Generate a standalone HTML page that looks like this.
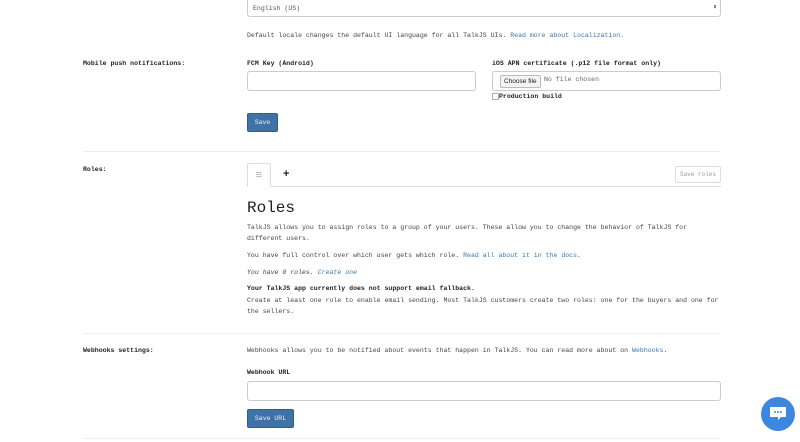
<!DOCTYPE html>
<html><head><style>
body{margin:0;width:800px;height:442px;background:#fff;position:relative;overflow:hidden;font-family:"Liberation Mono",monospace;font-size:6.55px;color:#444}
.a{position:absolute;white-space:nowrap}
.b{font-weight:bold;color:#222}
.l{color:#3a76b0}
.inp{position:absolute;border:1px solid #ccc;border-radius:3px;background:#fff;box-sizing:border-box}
.btn{position:absolute;background:#3f73a8;border:1px solid #2e5f91;border-radius:2px;color:#e8eef6;box-sizing:border-box;text-align:center;font-size:6.5px}
.hr{position:absolute;left:83px;width:637px;height:1px;background:#eee}
</style></head><body>
<div class="inp" style="left:247px;top:-2px;width:474px;height:19px"></div>
<div class="a" style="left:253px;top:5px;color:#555">English (US)</div>
<div class="a" style="left:713px;top:3px;font-size:7px;color:#333">⬍</div>
<div class="a" style="left:247px;top:32px">Default locale changes the default UI language for all TalkJS UIs. <span class="l">Read more about Localization.</span></div>

<div class="a b" style="left:83px;top:60px">Mobile push notifications:</div>
<div class="a b" style="left:247px;top:60px">FCM Key (Android)</div>
<div class="a b" style="left:492px;top:60px">iOS APN certificate (.p12 file format only)</div>
<div class="inp" style="left:247px;top:71px;width:229px;height:20px"></div>
<div class="inp" style="left:492px;top:71px;width:229px;height:20px"></div>
<div class="a" style="left:500px;top:75px;border:1px solid #bbb;border-radius:2px;background:#f3f3f3;font-family:'Liberation Sans',sans-serif;font-size:6.5px;padding:2px 3px;color:#222">Choose file</div>
<div class="a" style="left:544px;top:76px;color:#666">No file chosen</div>
<div class="a" style="left:492px;top:93px;width:5px;height:5px;border:1px solid #aaa;border-radius:1px"></div>
<div class="a b" style="left:499px;top:93px">Production build</div>
<div class="btn" style="left:247px;top:113px;width:31px;height:19px;line-height:17px">Save</div>
<div class="hr" style="top:151px"></div>

<div class="a b" style="left:83px;top:166px">Roles:</div>
<div class="a" style="left:247px;top:186px;width:474px;height:1px;background:#ddd"></div>
<div class="a" style="left:247px;top:163px;width:24px;height:24px;border:1px solid #ddd;border-bottom:1px solid #fff;border-radius:2px 2px 0 0;background:#fff;box-sizing:border-box"></div>
<div class="a" style="left:256px;top:171px;color:#777">☷</div>
<div class="a" style="left:283px;top:168px;font-size:11px;font-weight:bold;color:#222;font-family:'Liberation Sans',sans-serif">+</div>
<div class="a" style="left:675px;top:166px;width:46px;height:17px;border:1px solid #ddd;border-radius:2px;box-sizing:border-box;color:#999;text-align:center;line-height:15px;font-size:6px">Save roles</div>
<div class="a" style="left:247px;top:199px;font-size:16px;color:#222">Roles</div>
<div class="a" style="left:247px;top:224px">TalkJS allows you to assign roles to a group of your users. These allow you to change the behavior of TalkJS for</div>
<div class="a" style="left:247px;top:235px">different users.</div>
<div class="a" style="left:247px;top:252px">You have full control over which user gets which role. <span class="l">Read all about it in the docs</span>.</div>
<div class="a" style="left:247px;top:269px;font-style:italic">You have 0 roles. <span class="l">Create one</span></div>
<div class="a b" style="left:247px;top:285px">Your TalkJS app currently does not support email fallback.</div>
<div class="a" style="left:247px;top:297px">Create at least one role to enable email sending. Most TalkJS customers create two roles: one for the buyers and one for</div>
<div class="a" style="left:247px;top:308px">the sellers.</div>
<div class="hr" style="top:333px"></div>

<div class="a b" style="left:83px;top:347px">Webhooks settings:</div>
<div class="a" style="left:247px;top:347px">Webhooks allows you to be notified about events that happen in TalkJS. You can read more about on <span class="l">Webhooks</span>.</div>
<div class="a b" style="left:247px;top:369px">Webhook URL</div>
<div class="inp" style="left:247px;top:381px;width:474px;height:20px"></div>
<div class="btn" style="left:247px;top:409px;width:47px;height:19px;line-height:17px">Save URL</div>
<div class="hr" style="top:438px"></div>

<div class="a" style="left:761px;top:397px;width:34px;height:34px;border-radius:50%;background:#3d87e0"></div>
<svg class="a" style="left:768px;top:405px" width="20" height="18" viewBox="0 0 20 18"><path d="M2 2h16v10h-5l-3 3v-3H2z" fill="#fff"/><circle cx="7" cy="7" r="1" fill="#3d87e0"/><circle cx="10" cy="7" r="1" fill="#3d87e0"/><circle cx="13" cy="7" r="1" fill="#3d87e0"/></svg>
</body></html>
